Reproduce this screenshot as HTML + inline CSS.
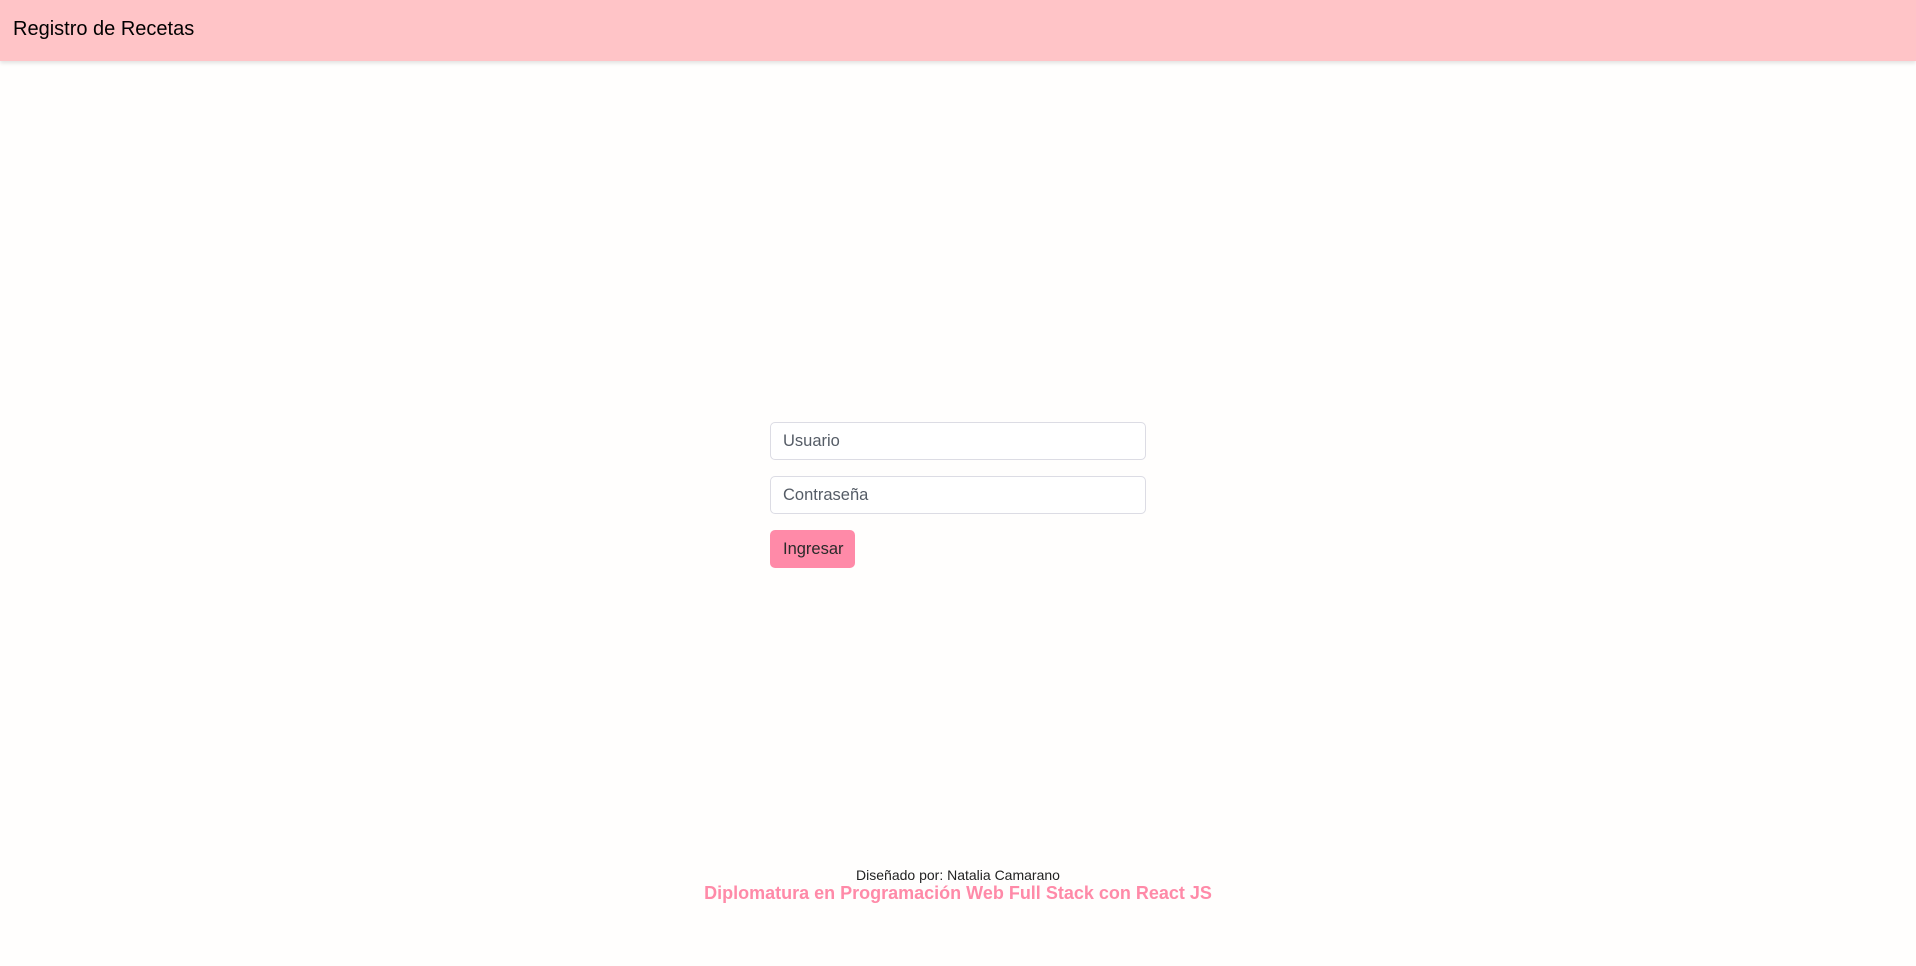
<!DOCTYPE html>
<html><head><meta charset="utf-8"><style>
body{margin:0;width:1916px;height:966px;background:#fffefd;font-family:"Liberation Sans",sans-serif;position:relative;overflow:hidden}
.hdr{position:absolute;left:0;top:0;width:1916px;height:61px;background:#ffc4c7;box-shadow:0 2px 4px rgba(0,0,0,.12)}
.hdr span{position:absolute;left:13px;top:18px;font-size:20px;color:#000}
.inp{position:absolute;left:770px;width:374px;height:36px;border:1px solid #dcdce4;border-radius:5px;background:#fff;box-sizing:content-box}
.inp span{position:absolute;left:12px;top:9px;font-size:16.5px;color:#555c66}
.btn{position:absolute;left:770px;top:530px;width:85px;height:38px;background:#ff8aa8;border-radius:5px}
.btn span{position:absolute;left:13px;top:10px;font-size:16.5px;color:#2a2a2a}
.f1{position:absolute;left:0;width:1916px;text-align:center;top:867px;font-size:14px;color:#222}
.f2{position:absolute;left:0;width:1916px;text-align:center;top:883px;font-size:18px;font-weight:bold;color:#ff8aa8}
</style></head><body>
<div class="hdr"><span>Registro de Recetas</span></div>
<div class="inp" style="top:422px"><span>Usuario</span></div>
<div class="inp" style="top:476px"><span>Contraseña</span></div>
<div class="btn"><span>Ingresar</span></div>
<div class="f1">Diseñado por: Natalia Camarano</div>
<div class="f2">Diplomatura en Programación Web Full Stack con React JS</div>
</body></html>
